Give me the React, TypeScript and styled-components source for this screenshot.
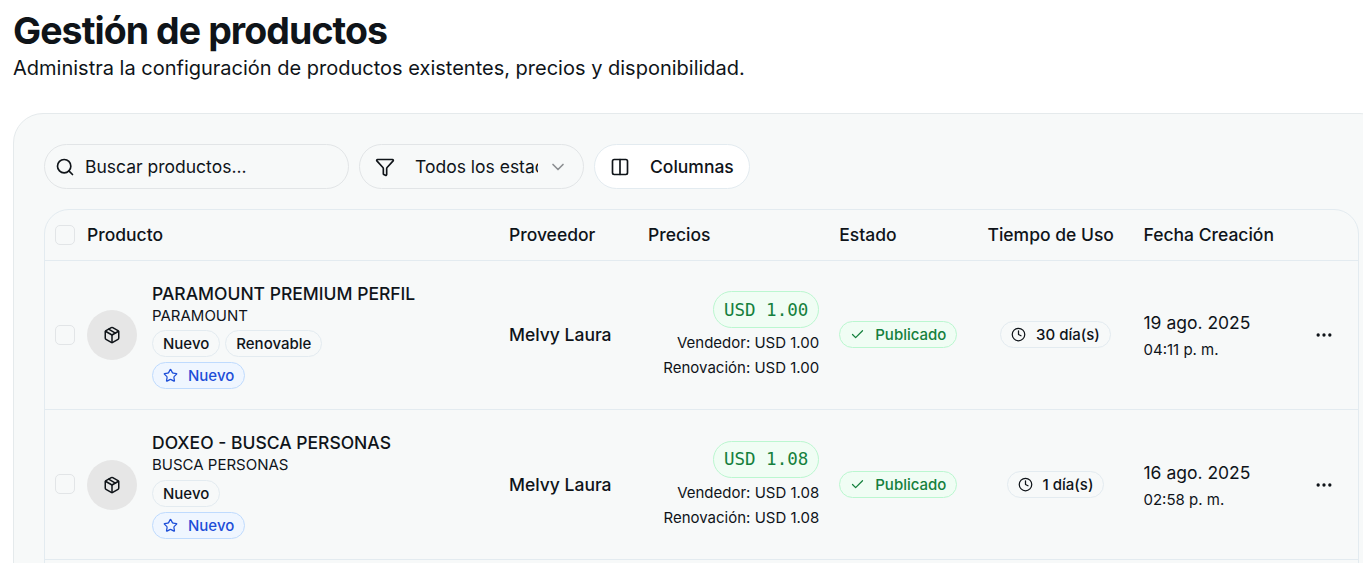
import { Check, ChevronDown, Clock, Columns2, Ellipsis, Funnel, Package, Search, Star } from 'lucide-react'
import styled, { createGlobalStyle } from 'styled-components'

interface ProductRow {
  name: string
  brand: string
  tags: string[]
  price: string
  usage: string
  date: string
  time: string
}

const rows: ProductRow[] = [
  {
    name: 'PARAMOUNT PREMIUM PERFIL',
    brand: 'PARAMOUNT',
    tags: ['Nuevo', 'Renovable'],
    price: 'USD 1.00',
    usage: '30 día(s)',
    date: '19 ago. 2025',
    time: '04:11 p. m.',
  },
  {
    name: 'DOXEO - BUSCA PERSONAS',
    brand: 'BUSCA PERSONAS',
    tags: ['Nuevo'],
    price: 'USD 1.08',
    usage: '1 día(s)',
    date: '16 ago. 2025',
    time: '02:58 p. m.',
  },
]

const headers = ['Producto', 'Proveedor', 'Precios', 'Estado', 'Tiempo de Uso', 'Fecha Creación']

export default function App() {
  return (
    <Page>
      <GlobalStyle />
      <Title>Gestión de productos</Title>
      <Subtitle>Administra la configuración de productos existentes, precios y disponibilidad.</Subtitle>
      <Panel>
        <Toolbar>
          <SearchBox>
            <Search size={20} strokeWidth={2} />
            <span>Buscar productos...</span>
          </SearchBox>
          <FilterBox>
            <Funnel size={20} strokeWidth={2} />
            <FilterText>Todos los estados</FilterText>
            <ChevronDown size={20} strokeWidth={2} color="#8b8e91" />
          </FilterBox>
          <ColumnsButton>
            <Columns2 size={20} strokeWidth={2} />
            Columnas
          </ColumnsButton>
        </Toolbar>
        <Table>
          <HeaderRow>
            <HeaderCell>
              <Checkbox />
            </HeaderCell>
            {headers.map((h) => (
              <HeaderCell key={h}>{h}</HeaderCell>
            ))}
            <HeaderCell />
          </HeaderRow>
          {rows.map((row) => (
            <Row key={row.name}>
              <Cell>
                <Checkbox />
              </Cell>
              <ProductCell>
                <Avatar>
                  <Package size={18} strokeWidth={2} />
                </Avatar>
                <ProductInfo>
                  <ProductName>{row.name}</ProductName>
                  <ProductBrand>{row.brand}</ProductBrand>
                  <Tags>
                    {row.tags.map((t) => (
                      <Tag key={t}>{t}</Tag>
                    ))}
                  </Tags>
                  <Tags>
                    <BlueTag>
                      <Star size={15} strokeWidth={2} />
                      Nuevo
                    </BlueTag>
                  </Tags>
                </ProductInfo>
              </ProductCell>
              <Cell>
                <Provider>Melvy Laura</Provider>
              </Cell>
              <PriceCell>
                <PricePill>{row.price}</PricePill>
                <PriceLine>Vendedor: {row.price}</PriceLine>
                <PriceLine>Renovación: {row.price}</PriceLine>
              </PriceCell>
              <Cell>
                <StatusBadge>
                  <Check size={15} strokeWidth={2} />
                  Publicado
                </StatusBadge>
              </Cell>
              <CenterCell>
                <UsageBadge>
                  <Clock size={15} strokeWidth={2} />
                  {row.usage}
                </UsageBadge>
              </CenterCell>
              <DateCell>
                <DateText>{row.date}</DateText>
                <TimeText>{row.time}</TimeText>
              </DateCell>
              <ActionCell>
                <Ellipsis size={20} strokeWidth={2} />
              </ActionCell>
            </Row>
          ))}
        </Table>
      </Panel>
    </Page>
  )
}

const GlobalStyle = createGlobalStyle`
  html, body {
    margin: 0;
    height: 100%;
    overflow: hidden;
    background: #fff;
  }
  body {
    font-family: Inter, "Liberation Sans", sans-serif;
    color: #0f1419;
  }
`

const Page = styled.div`
  width: 1410px;
  height: 555px;
  overflow: hidden;
  padding: 8px 0 0 13px;
`

const Title = styled.h1`
  margin: 0;
  font-size: 37.5px;
  line-height: 45px;
  font-weight: 700;
  letter-spacing: -0.025em;
`

const Subtitle = styled.p`
  margin: 0;
  font-size: 20px;
  line-height: 30px;
  font-weight: 400;
`

const Panel = styled.section`
  margin-top: 30px;
  width: 1377px;
  box-sizing: border-box;
  padding: 30px;
  background: #f7f9f9;
  border: 1px solid #e5eaec;
  border-radius: 30px;
`

const Toolbar = styled.div`
  display: flex;
  gap: 10px;
  margin-bottom: 20px;
`

const Pill = styled.div`
  box-sizing: border-box;
  height: 45px;
  display: flex;
  align-items: center;
  border: 1px solid #e2e5e7;
  border-radius: 23px;
  font-size: 17.5px;
`

const SearchBox = styled(Pill)`
  width: 305px;
  padding-left: 10px;
  gap: 10px;
`

const FilterBox = styled(Pill)`
  width: 225px;
  padding-left: 15px;
`

const FilterText = styled.span`
  width: 123px;
  margin-left: 20px;
  margin-right: 10px;
  overflow: hidden;
  white-space: nowrap;
`

const ColumnsButton = styled(Pill)`
  padding: 0 15px;
  gap: 20px;
  background: #fff;
  border-color: #e3ebf0;
  font-weight: 500;
`

const Table = styled.div`
  width: 1315px;
  box-sizing: border-box;
  padding-bottom: 40px;
  border: 1px solid #e3ebf0;
  border-radius: 25px;
`

const columns = '32px 422px 139px 191.25px 148.25px 156px 166px 58px'

const HeaderRow = styled.div`
  display: grid;
  grid-template-columns: ${columns};
  height: 49.75px;
  align-items: center;
  border-bottom: 1px solid #e3ebf0;
`

const Row = styled.div`
  display: grid;
  grid-template-columns: ${columns};
  box-sizing: border-box;
  height: 149.5px;
  align-items: center;
  border-bottom: 1px solid #e3ebf0;
`

const Cell = styled.div`
  padding: 0 10px 0.5px;
  display: flex;
  align-items: center;
`

const HeaderCell = styled(Cell)`
  padding-bottom: 0;
  font-size: 17.5px;
  font-weight: 500;
`

const Checkbox = styled.span`
  display: block;
  flex: none;
  box-sizing: border-box;
  width: 20px;
  height: 20px;
  border: 1px solid #e2e5e7;
  border-radius: 5px;
`

const ProductCell = styled(Cell)`
  padding-bottom: 0;
  gap: 15px;
`

const Avatar = styled.div`
  flex: none;
  width: 50px;
  height: 50px;
  border-radius: 50%;
  background: #e6e6e6;
  display: flex;
  align-items: center;
  justify-content: center;
`

const ProductInfo = styled.div`
  display: flex;
  flex-direction: column;
`

const ProductName = styled.div`
  font-size: 17.5px;
  line-height: 26px;
  font-weight: 500;
`

const ProductBrand = styled.div`
  font-size: 15px;
  line-height: 18px;
  margin-bottom: 5.5px;
`

const Tags = styled.div`
  display: flex;
  gap: 5px;
  margin-bottom: 5px;
  &:last-child {
    margin-bottom: 0;
  }
`

const Tag = styled.span`
  box-sizing: border-box;
  height: 27px;
  padding: 0 10px;
  display: inline-flex;
  align-items: center;
  border: 1px solid #e3ebf0;
  border-radius: 14px;
  font-size: 15px;
  font-weight: 500;
`

const BlueTag = styled(Tag)`
  gap: 10px;
  color: #1d4ed8;
  background: #eff6ff;
  border-color: #bfdbfe;
`

const Provider = styled.div`
  font-size: 17.5px;
  font-weight: 500;
`

const PriceCell = styled(Cell)`
  padding-top: 1px;
  padding-bottom: 0;
  flex-direction: column;
  align-items: flex-end;
`

const PricePill = styled.div`
  box-sizing: border-box;
  height: 37px;
  padding: 0 10px;
  display: flex;
  align-items: center;
  font-family: "DejaVu Sans Mono", monospace;
  font-size: 17.5px;
  color: #15803d;
  background: #f0fdf4;
  border: 1px solid #bbf7d0;
  border-radius: 19px;
  margin-bottom: 2px;
`

const PriceLine = styled.div`
  font-size: 15px;
  line-height: 25px;
`

const StatusBadge = styled.span`
  box-sizing: border-box;
  height: 27px;
  padding: 0 10px;
  display: inline-flex;
  align-items: center;
  gap: 10px;
  color: #15803d;
  background: #f0fdf4;
  border: 1px solid #bbf7d0;
  border-radius: 14px;
  font-size: 15px;
  font-weight: 500;
  white-space: nowrap;
`

const CenterCell = styled(Cell)`
  justify-content: center;
`

const ActionCell = styled(Cell)`
  padding: 0 0 0 14px;
`

const UsageBadge = styled.span`
  box-sizing: border-box;
  height: 27px;
  padding: 0 10px;
  display: inline-flex;
  align-items: center;
  gap: 10px;
  border: 1px solid #e3ebf0;
  border-radius: 14px;
  font-size: 15px;
  font-weight: 500;
  white-space: nowrap;
`

const DateCell = styled(Cell)`
  padding-bottom: 0;
  flex-direction: column;
  align-items: flex-start;
`

const DateText = styled.div`
  font-size: 17.5px;
  line-height: 25px;
`

const TimeText = styled.div`
  font-size: 15px;
  line-height: 20px;
  margin-top: 5px;
`
